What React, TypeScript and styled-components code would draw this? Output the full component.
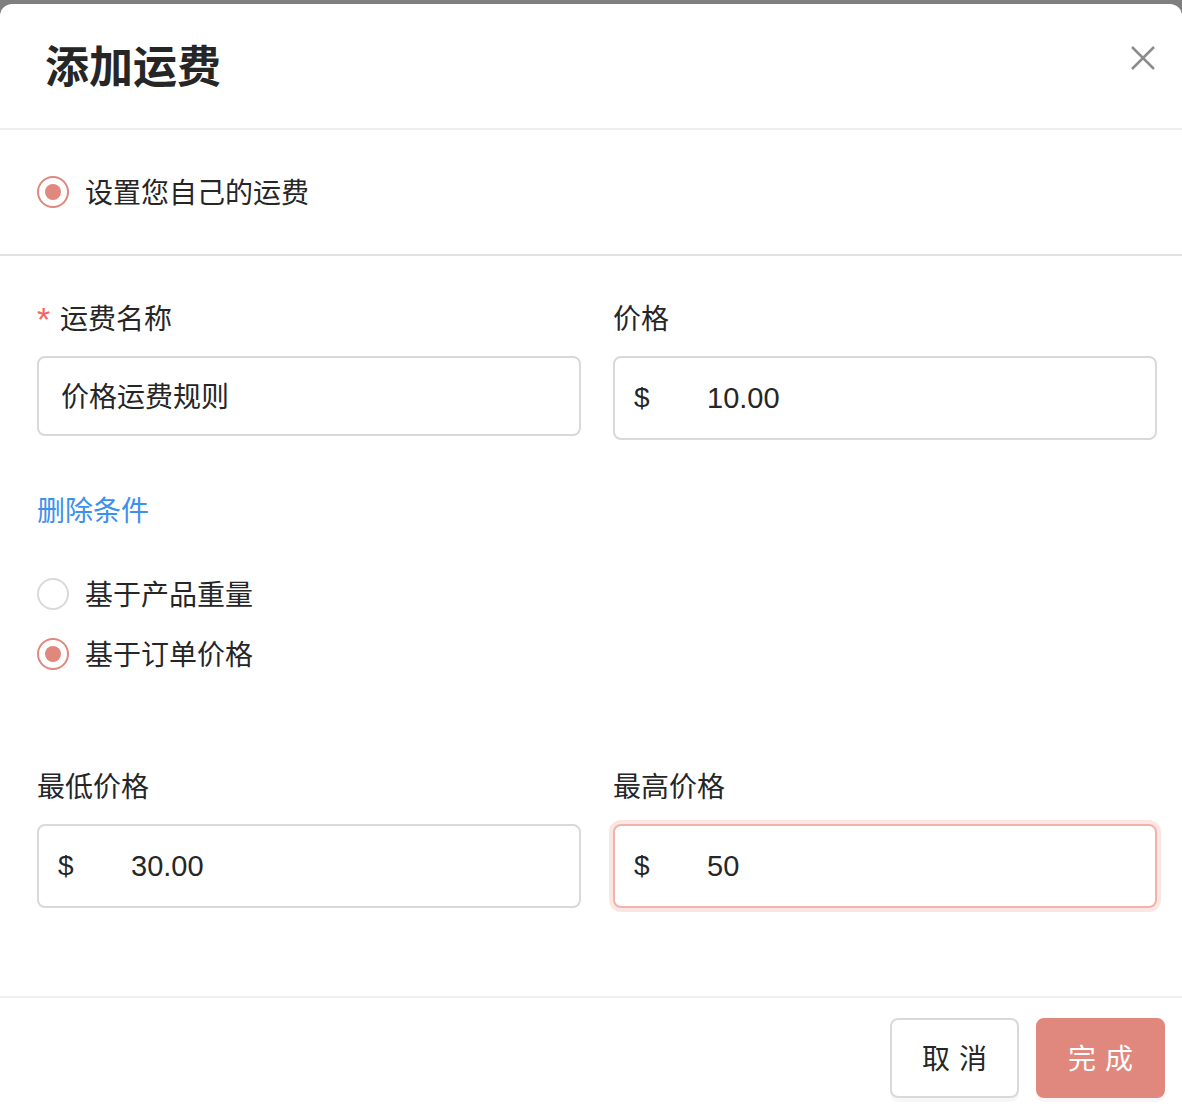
import React from "react";
import styled, { createGlobalStyle } from "styled-components";

const Global = createGlobalStyle`
  html, body { margin: 0; padding: 0; background: #7f7f7f; }
  body { font-family: "Liberation Sans", "Noto Sans CJK SC", sans-serif; color: #262626; overflow: hidden; }
  * { box-sizing: border-box; }
`;

const Page = styled.div`
  width: 1182px;
  height: 1112px;
  padding-top: 4px;
  overflow: hidden;
`;
const Modal = styled.div`
  width: 1182px;
  height: 1108px;
  background: #fff;
  border-radius: 12px 12px 0 0;
  display: flex;
  flex-direction: column;
`;
const Header = styled.header`
  height: 126px;
  flex: none;
  border-bottom: 2px solid #f0f0f0;
  display: flex;
  align-items: center;
  justify-content: space-between;
  padding: 4px 27px 0 45px;
`;
const Title = styled.h1`
  margin: 0;
  font-size: 44px;
  line-height: 60px;
  font-weight: 700;
  color: #262626;
`;
const CloseButton = styled.button`
  width: 24px;
  height: 24px;
  padding: 0;
  border: 0;
  background: none;
  margin-bottom: 21px;
  color: #8c8c8c;
  display: block;
`;
const ShippingType = styled.section`
  height: 126px;
  flex: none;
  border-bottom: 2px solid #e2e2e2;
  padding: 0 37px;
  display: flex;
  align-items: center;
`;
const Body = styled.main`
  flex: 1;
  padding: 44px 25px 0 37px;
`;
const FieldGrid = styled.div<{ $top?: number }>`
  display: grid;
  grid-template-columns: 544px 544px;
  column-gap: 32px;
  align-items: start;
  margin-top: ${(p) => p.$top ?? 0}px;
`;
const Field = styled.div`
  display: flex;
  flex-direction: column;
`;
const Label = styled.label`
  height: 36px;
  padding-top: 4px;
  margin-bottom: 20px;
  font-size: 28px;
  line-height: 32px;
  color: #262626;
  display: flex;
  align-items: center;
`;
const Required = styled.span`
  color: #f5625d;
  width: 23px;
  height: 32px;
  font-size: 34px;
  font-family: "Liberation Sans", sans-serif;
  line-height: 30px;
`;
const TextBox = styled.input`
  width: 100%;
  height: 80px;
  border: 2px solid #d9d9d9;
  border-radius: 8px;
  padding: 0 22px 2px;
  font: inherit;
  font-size: 28px;
  color: #262626;
  background: #fff;
  outline: none;
`;
const AmountBox = styled.div<{ $focused?: boolean }>`
  height: 84px;
  border: 2px solid ${(p) => (p.$focused ? "#f3b2aa" : "#d9d9d9")};
  border-radius: 8px;
  padding: 0 19px;
  display: flex;
  align-items: center;
  font-size: 28px;
  background: #fff;
  box-shadow: ${(p) => (p.$focused ? "0 0 0 4px #fae6e3" : "none")};
`;
const Currency = styled.span`
  width: 73px;
  flex: none;
  color: #262626;
`;
const AmountInput = styled.input`
  flex: 1;
  min-width: 0;
  border: 0;
  padding: 0;
  outline: none;
  font: inherit;
  font-size: 29px;
  color: #262626;
  background: transparent;
`;
const LinkButton = styled.button`
  display: block;
  margin: 52px 0 0;
  padding: 0;
  border: 0;
  background: none;
  font: inherit;
  font-size: 28px;
  line-height: 40px;
  color: #3d8ff0;
`;
const RadioGroup = styled.div`
  margin-top: 46px;
  display: flex;
  flex-direction: column;
  gap: 28px;
`;
const RadioRow = styled.label`
  display: flex;
  align-items: center;
  gap: 16px;
  height: 32px;
  font-size: 28px;
  color: #262626;
`;
const RadioText = styled.span`
  margin-top: -2px;
`;
const RadioCircle = styled.span<{ $on?: boolean }>`
  width: 32px;
  height: 32px;
  flex: none;
  border-radius: 50%;
  border: 2px solid ${(p) => (p.$on ? "#e0877e" : "#d9d9d9")};
  background: #fff;
  display: flex;
  align-items: center;
  justify-content: center;
  &::after {
    content: "";
    width: 16px;
    height: 16px;
    border-radius: 50%;
    background: ${(p) => (p.$on ? "#e0877e" : "transparent")};
  }
`;
const Footer = styled.footer`
  height: 116px;
  flex: none;
  border-top: 2px solid #f0f0f0;
  padding: 20px 17px 0 0;
  display: flex;
  justify-content: flex-end;
  gap: 17px;
`;
const FooterButton = styled.button<{ $primary?: boolean }>`
  width: 129px;
  height: 80px;
  border-radius: 8px;
  border: 2px solid ${(p) => (p.$primary ? "#e0877e" : "#d9d9d9")};
  background: ${(p) => (p.$primary ? "#e0877e" : "#fff")};
  color: ${(p) => (p.$primary ? "#fff" : "#262626")};
  font: inherit;
  font-size: 28px;
  letter-spacing: 9px;
  text-indent: 9px;
  padding: 0 0 3px;
  box-shadow: 0 4px 0 rgba(0, 0, 0, 0.03);
`;

function Radio({ on, children }: { on?: boolean; children: React.ReactNode }) {
  return (
    <RadioRow>
      <RadioCircle $on={on} />
      <RadioText>{children}</RadioText>
    </RadioRow>
  );
}

function Amount({ value, focused }: { value: string; focused?: boolean }) {
  return (
    <AmountBox $focused={focused}>
      <Currency>$</Currency>
      <AmountInput value={value} readOnly />
    </AmountBox>
  );
}

export default function App() {
  return (
    <Page>
      <Global />
      <Modal>
        <Header>
          <Title>添加运费</Title>
          <CloseButton aria-label="关闭">
            <svg width="24" height="24" viewBox="0 0 24 24" fill="none" stroke="currentColor" strokeWidth="2.5">
              <path d="M1 1 L23 23 M23 1 L1 23" />
            </svg>
          </CloseButton>
        </Header>
        <ShippingType>
          <Radio on>设置您自己的运费</Radio>
        </ShippingType>
        <Body>
          <FieldGrid>
            <Field>
              <Label>
                <Required>*</Required>运费名称
              </Label>
              <TextBox value="价格运费规则" readOnly />
            </Field>
            <Field>
              <Label>价格</Label>
              <Amount value="10.00" />
            </Field>
          </FieldGrid>
          <LinkButton>删除条件</LinkButton>
          <RadioGroup>
            <Radio>基于产品重量</Radio>
            <Radio on>基于订单价格</Radio>
          </RadioGroup>
          <FieldGrid $top={98}>
            <Field>
              <Label>最低价格</Label>
              <Amount value="30.00" />
            </Field>
            <Field>
              <Label>最高价格</Label>
              <Amount value="50" focused />
            </Field>
          </FieldGrid>
        </Body>
        <Footer>
          <FooterButton>取消</FooterButton>
          <FooterButton $primary>完成</FooterButton>
        </Footer>
      </Modal>
    </Page>
  );
}
